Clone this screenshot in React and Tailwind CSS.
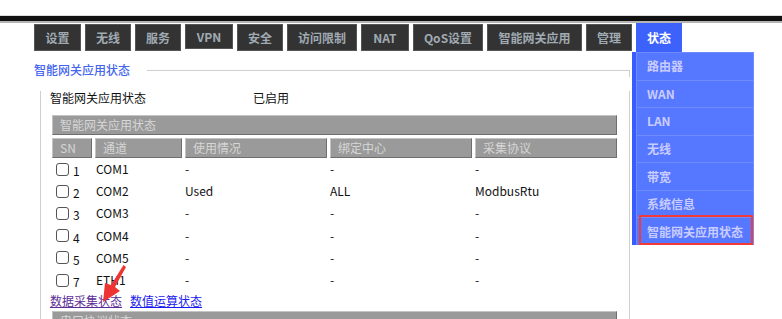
import React from 'react';

const tabs = [
  { label: '设置', w: 'w-[47px]' },
  { label: '无线', w: 'w-[46px]' },
  { label: '服务', w: 'w-[46px]' },
  { label: 'VPN', w: 'w-[48px]', short: true },
  { label: '安全', w: 'w-[46px]' },
  { label: '访问限制', w: 'w-[70px]' },
  { label: 'NAT', w: 'w-[48px]' },
  { label: 'QoS设置', w: 'w-[70px]' },
  { label: '智能网关应用', w: 'w-[95px]' },
  { label: '管理', w: 'w-[46px]' },
];

const menu = ['路由器', 'WAN', 'LAN', '无线', '带宽', '系统信息', '智能网关应用状态'];

const rows = [
  { sn: 1, ch: 'COM1', use: '-', center: '-', proto: '-' },
  { sn: 2, ch: 'COM2', use: 'Used', center: 'ALL', proto: 'ModbusRtu' },
  { sn: 3, ch: 'COM3', use: '-', center: '-', proto: '-' },
  { sn: 4, ch: 'COM4', use: '-', center: '-', proto: '-' },
  { sn: 5, ch: 'COM5', use: '-', center: '-', proto: '-' },
  { sn: 7, ch: 'ETH1', use: '-', center: '-', proto: '-' },
];

const bevel =
  'border border-t-[#c4c4c4] border-l-[#c4c4c4] border-r-[#6e6e6e] border-b-[#6e6e6e] bg-[#9a9a9a] text-[#d6d6d6]';

const cols = 'grid grid-cols-[40px_87px_142px_142px_142px] gap-x-[3px]';

export default function App() {
  return (
    <div className="relative w-[782px] h-[319px] overflow-hidden bg-white text-[12px] text-[#111] font-['Noto_Sans_CJK_SC','Noto_Sans',sans-serif]">
      {/* top rule */}
      <div className="h-[15px]" />
      <div className="h-px bg-[#dcdcdc]" />
      <div className="h-[5px] bg-[#111]" />
      <div className="h-[2px] bg-[#b4b4b4]" />

      {/* nav tabs */}
      <div className="flex items-start gap-[4px] pl-[34px] h-[29px]">
        {tabs.map((t) => (
          <div
            key={t.label}
            className={`${t.w} ${t.short ? 'h-[25px]' : 'h-[27px]'} mt-px flex items-center justify-center bg-[#333] border border-[#555] text-[#a0aab2] font-bold leading-none`}
          >
            {t.label}
          </div>
        ))}
        <div className="w-[46px] h-[29px] flex items-center justify-center bg-[#3d62fc] text-white font-bold leading-none">
          状态
        </div>
      </div>

      {/* fieldset */}
      <div className="ml-[34px] mt-[11px] w-[596px]">
        <div className="flex h-[14px]">
          <span className="leading-[14px] text-[#4465ee] font-medium">智能网关应用状态</span>
          <div className="ml-[17px] mt-[7px] flex-1 border-t border-r border-[#cfcfcf]" />
        </div>
        <div className="ml-[6px] h-[260px] border-l border-r border-[#cfcfcf]">
          <div className="mt-[14px] flex h-[14px] leading-[14px] pl-[9px]">
            <span className="w-[203px]">智能网关应用状态</span>
            <span>已启用</span>
          </div>

          <div className={`ml-[11px] mt-[10px] w-[565px] h-[20px] leading-[18px] pl-[7px] ${bevel}`}>
            智能网关应用状态
          </div>

          <div className={`ml-[11px] mt-[3px] w-[565px] h-[20px] ${cols}`}>
            {['SN', '通道', '使用情况', '绑定中心', '采集协议'].map((h) => (
              <div key={h} className={`h-[20px] leading-[18px] pl-[7px] ${bevel}`}>
                {h}
              </div>
            ))}
          </div>

          {rows.map((r) => (
            <div key={r.sn} className={`ml-[11px] w-[565px] h-[22.2px] items-center ${cols}`}>
              <div className="flex items-center pl-[4px]">
                <span className="w-[13px] h-[13px] rounded-[3px] border border-[#555] bg-white" />
                <span className="ml-[4px] mt-[4px] leading-none">{r.sn}</span>
              </div>
              <div className="pl-px">{r.ch}</div>
              <div>{r.use}</div>
              <div>{r.center}</div>
              <div>{r.proto}</div>
            </div>
          ))}

          <div className="mt-[3px] flex gap-[8px] pl-[9px] h-[14px] leading-[14px]">
            <span className="underline text-[#5b2d96]">数据采集状态</span>
            <span className="underline text-[#1a1aee]">数值运算状态</span>
          </div>

          <div className={`ml-[11px] mt-[3px] w-[565px] h-[20px] leading-[18px] pl-[7px] ${bevel}`}>
            串口协议状态
          </div>
        </div>
      </div>

      {/* status dropdown */}
      <div className="absolute left-[632px] top-[52px] w-[122px] h-[193px] bg-[#3a5cff] pl-[4px] flex flex-col">
        {menu.map((m) => (
          <div
            key={m}
            className="h-[27.57px] border-t border-l border-r border-[#6f8cff] bg-[#5677ff] pl-[10px] flex items-center text-[#c9ccff] font-bold leading-none"
          >
            {m}
          </div>
        ))}
      </div>
      <div className="absolute left-[639px] top-[215px] w-[114px] h-[30px] border-2 border-[#f23a3a]" />

      {/* annotation arrow */}
      <svg className="absolute left-0 top-0" width="782" height="319" viewBox="0 0 782 319">
        <polygon
          points="123.5,265 126,267 115,287 120,291 103,302 105,283 111,285"
          fill="#ee3333"
        />
      </svg>
    </div>
  );
}
